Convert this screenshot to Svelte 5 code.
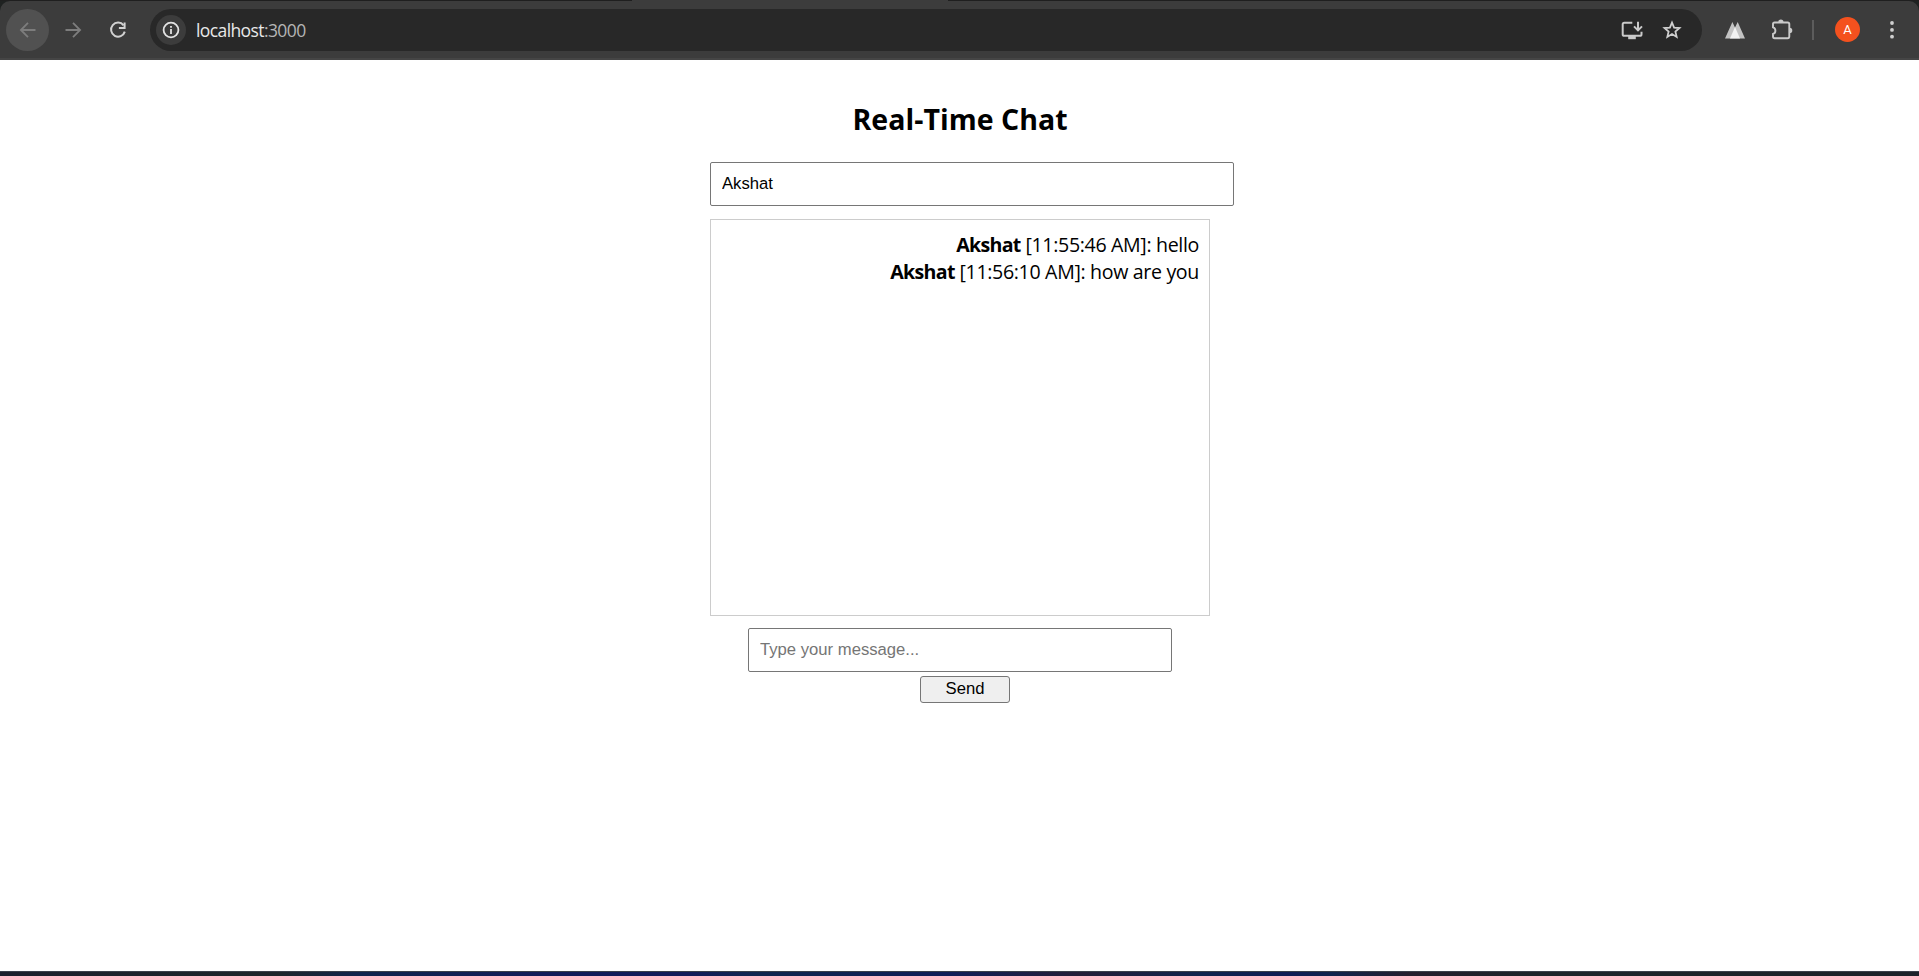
<script>
  const messages = [
    { id: 1, user: 'Akshat', time: '11:55:46 AM', text: 'hello' },
    { id: 2, user: 'Akshat', time: '11:56:10 AM', text: 'how are you' }
  ];
  let name = $state('Akshat');
  let draft = $state('');
</script>

<div class="window">
  <header class="chrome">
    <div class="toolbar">
      <div class="nav back">
        <svg width="24" height="24" viewBox="0 0 24 24" fill="none" stroke="#7d7d7d" stroke-width="1.8"><path d="M19.5 12H5.5M12 4.9L4.9 12l7.1 7.1" /></svg>
      </div>
      <div class="nav forward">
        <svg width="24" height="24" viewBox="0 0 24 24" fill="none" stroke="#7d7d7d" stroke-width="1.8"><path d="M4.5 12h14M12 4.9l7.1 7.1-7.1 7.1" /></svg>
      </div>
      <div class="nav reload">
        <svg width="24" height="24" viewBox="0 0 24 24" fill="none" stroke="#d2d2d2" stroke-width="2"><path d="M17.6 7.3A7 7 0 1 0 18.8 13.6" /><path d="M18.6 4.4v5.7h-5.7" /></svg>
      </div>
      <div class="address">
        <div class="info">
          <svg width="18" height="18" viewBox="0 0 18 18" fill="none" stroke="#e3e3e3" stroke-width="1.8"><circle cx="9" cy="9" r="7.4" /><path d="M9 8v5M9 5v1.8" /></svg>
        </div>
        <span class="url">localhost<span class="port">:3000</span></span>
        <svg class="install" width="24" height="24" viewBox="0 0 24 24" fill="none" stroke="#cacaca" stroke-width="2"><path d="M12.3 4.7H4.3q-1.6 0-1.6 1.6v9.9q0 1.6 1.6 1.6h15.6q1.6 0 1.6-1.6v-2.4M18 3.8v8M14 8.4l4 4 4-4" /><path d="M8.2 18h7.6v3.2H8.2z" fill="#cacaca" stroke="none" /></svg>
        <svg class="star" width="22" height="22" viewBox="0 0 22 22" fill="none" stroke="#d0d0d0" stroke-width="1.8"><path d="M11 3.6l2.1 5 5.4.45-4.1 3.55 1.25 5.3L11 15.1l-4.65 2.8 1.25-5.3-4.1-3.55 5.4-.45z" /></svg>
      </div>
      <svg class="peaks" width="20" height="18" viewBox="0 0 20 18"><path d="M0 17.5L7.4 1l2.6 5.4L12.7 1 20 17.5z" fill="#c3c3c3" /><path d="M5 17.5L10 6l5 11.5z" fill="#f2f2f2" /></svg>
      <svg class="puzzle" width="22" height="22" viewBox="0 0 22 22"><path d="M3.6 3.5h13.1q1.6 0 1.6 1.6v12.5q0 1.6-1.6 1.6H3.6Q2 19.2 2 17.6v-2.7a3.4 3.4 0 0 0 0-6.5V5.1q0-1.6 1.6-1.6z" fill="none" stroke="#cacaca" stroke-width="1.9" /><path d="M7.3 3a2.6 2.6 0 0 1 5.2 0zM18.7 8.8a2.6 2.6 0 0 1 0 5.2z" fill="#cacaca" /></svg>
      <div class="divider"></div>
      <div class="avatar">A</div>
      <svg class="more" width="6" height="20" viewBox="0 0 6 20" fill="#d0d0d0"><circle cx="3" cy="3" r="1.9" /><circle cx="3" cy="9.9" r="1.9" /><circle cx="3" cy="16.7" r="1.9" /></svg>
    </div>
  </header>

  <main>
    <section class="chat">
      <h2>Real-Time Chat</h2>
      <input class="name" type="text" bind:value={name} />
      <div class="log">
        {#each messages as m (m.id)}
          <div class="message"><strong>{m.user}</strong> [{m.time}]: {m.text}</div>
        {/each}
      </div>
      <div class="compose">
        <input class="draft" type="text" placeholder="Type your message..." bind:value={draft} />
        <button>Send</button>
      </div>
    </section>
  </main>
  <footer></footer>
</div>

<style>
  :global(body) { background: #fff; overflow: hidden; }
  .window { height: 976px; display: flex; flex-direction: column; }
  .window * { box-sizing: border-box; }
  svg { display: block; flex: none; }
  .chrome { height: 60px; flex: none; background: linear-gradient(90deg, #1f1f1f 632px, #3c3c3c 632px 948px, #1f1f1f 948px) 0 0 / 100% 1px no-repeat, #1f2221; padding-top: 1px; }
  .toolbar { height: 59px; background: #3c3c3c; border-radius: 10px 10px 0 0; border-bottom: 2px solid #454545; display: flex; align-items: center; padding: 0 24px 0 6px; }
  .nav { width: 43px; height: 42px; border-radius: 50%; display: flex; align-items: center; justify-content: center; flex: none; }
  .back { background: #515151; }
  .forward { margin-left: 2px; }
  .reload { margin-left: 2px; }
  .address { margin-left: 11px; width: 1552px; height: 42px; border-radius: 21px; background: #282828; display: flex; align-items: center; padding: 0 19px 0 6px; flex: none; }
  .info { width: 30px; height: 30px; border-radius: 50%; background: #3c3c3c; display: flex; align-items: center; justify-content: center; }
  .url { margin-left: 10px; font: 17.5px/24px "Open Sans", sans-serif; letter-spacing: -0.6px; color: #e8e8e8; }
  .port { color: #b5b5b5; }
  .install { margin-left: auto; }
  .star { margin-left: 17px; }
  .peaks { margin-left: 23px; }
  .puzzle { margin-left: 26px; }
  .divider { margin-left: 19px; width: 2px; height: 20px; background: #5c5c5c; flex: none; }
  .avatar { margin-left: 21px; width: 25px; height: 25px; border-radius: 50%; background: #f4511e; color: #fff; font: 13px/25px Roboto, sans-serif; text-align: center; flex: none; }
  .more { margin-left: auto; }
  main { flex: 1; }
  .chat { width: 500px; margin: 0 0 0 710px; display: flex; flex-direction: column; align-items: flex-start; }
  h2 { width: 500px; margin: 39px 0 0; height: 63px; font: 700 28.5px/40px "Open Sans", sans-serif; color: #000; padding-left: 142.5px; white-space: nowrap; letter-spacing: 0.04px; }
  input { font: 16.6667px "Liberation Sans", Arial, sans-serif; color: #000; border: 1px solid #767676; border-radius: 2px; background: #fff; outline: none; height: 44px; padding: 0 11px 1px; }
  input::placeholder { color: #757575; opacity: 1; }
  .name { width: 524px; }
  .log { margin-top: 13px; width: 500px; height: 397px; border: 1px solid #ccc; padding: 11px 10px; text-align: right; font: 19.6px/27px "Open Sans", sans-serif; color: #000; }
  .message { white-space: nowrap; letter-spacing: -0.34px; }
  .message strong { letter-spacing: -0.7px; }
  .compose { width: 500px; margin-top: 12px; display: flex; flex-direction: column; align-items: center; }
  .draft { width: 424px; }
  button { margin: 4px 0 0 10px; width: 90px; height: 27px; border: 1px solid #767676; border-radius: 3px; background: #efefef; color: #000; font: 16.6667px "Liberation Sans", Arial, sans-serif; padding: 0 0 2px; }
  footer { height: 5px; flex: none; border-top: 1px solid #3a404a; background: linear-gradient(90deg, #1b202c 0, #1d262b 280px, #10244d 360px, #111c59 540px, #121c5a 690px, #10264e 760px, #101e58 950px, #241f38 1080px, #10244d 1200px, #101d55 1290px, #10244d 1330px, #241f2d 1410px, #1c2429 1530px, #1c232a); }
</style>
